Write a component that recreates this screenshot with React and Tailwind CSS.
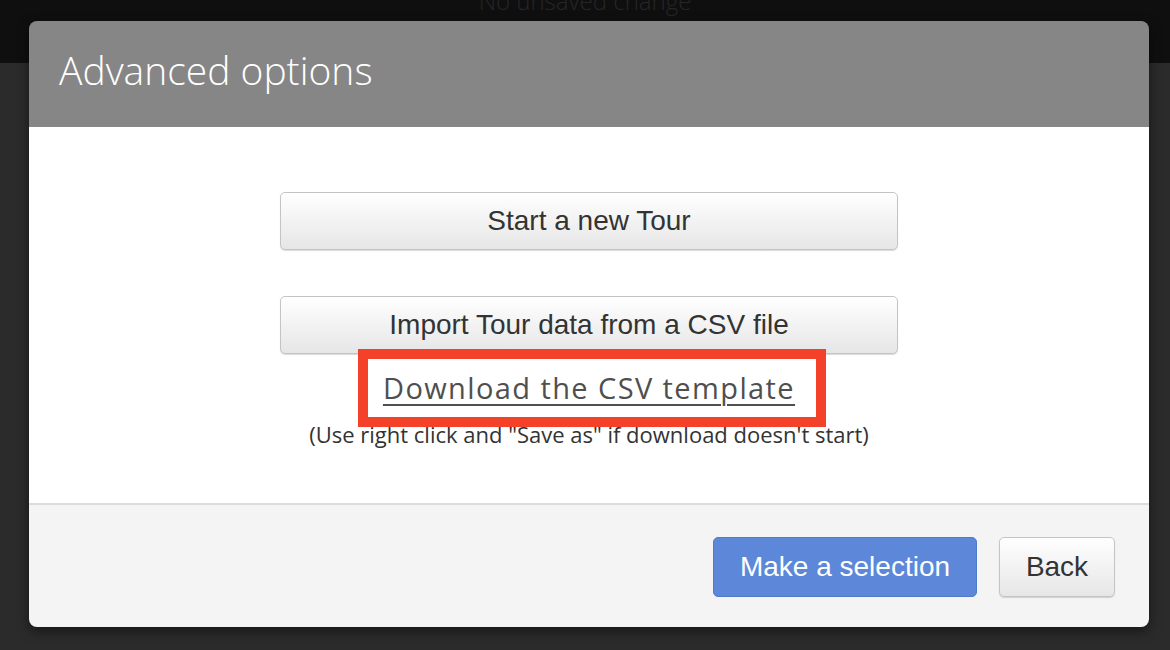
import React from "react";

const btn =
  "rounded-[5px] border border-[#c4c4c4] bg-gradient-to-b from-white to-[#e6e6e6] text-[#333] shadow-[0_1px_1px_rgba(0,0,0,0.15)]";

export default function App() {
  return (
    <div className="relative h-[650px] w-[1170px] overflow-hidden bg-[#2b2b2b] font-['Liberation_Sans',sans-serif]">
      {/* barre du haut derrière la modale */}
      <div className="flex h-[63px] justify-center bg-[#0f0f0f]">
        <p className="mt-[-17px] font-['Open_Sans',sans-serif] text-[24px] font-light text-[#262626]">
          No unsaved change
        </p>
      </div>

      {/* Modale */}
      <div className="absolute left-[29px] top-[21px] flex w-[1120px] flex-col overflow-hidden rounded-[8px] shadow-[0_4px_12px_rgba(0,0,0,0.5)]">
        <div className="flex h-[106px] items-center bg-[#868686] px-[30px] pb-[8px]">
          <h1 className="font-['Open_Sans',sans-serif] text-[39px] font-light text-white">
            Advanced options
          </h1>
        </div>

        <div className="flex h-[376px] flex-col items-center bg-white pt-[65px]">
          <button className={`${btn} h-[58px] w-[618px] text-[28px]`}>
            Start a new Tour
          </button>
          <button className={`${btn} mt-[46px] h-[58px] w-[618px] text-[28px]`}>
            Import Tour data from a CSV file
          </button>

          <div className="relative mt-[8px] flex h-[52px] items-center">
            <a
              href="#"
              className="font-['Open_Sans',sans-serif] text-[29px] font-medium tracking-[1.4px] text-[#4f4f4f] underline decoration-[2px] underline-offset-[5px]"
            >
              Download the CSV template
            </a>
          </div>
          <p className="mt-[4px] font-['Open_Sans',sans-serif] text-[22px] text-[#333]">
            (Use right click and "Save as" if download doesn't start)
          </p>
        </div>

        <div className="flex h-[124px] items-start justify-end gap-[22px] border-t-2 border-[#dcdcdc] bg-[#f4f4f4] pr-[34px] pt-[32px]">
          <button className="h-[60px] w-[264px] rounded-[5px] border border-[#4f7ad0] bg-[#5d87d9] text-[28px] text-white">
            Make a selection
          </button>
          <button className={`${btn} h-[60px] w-[116px] text-[28px]`}>
            Back
          </button>
        </div>
      </div>

      {/* cadre rouge d'annotation */}
      <div className="absolute left-[358px] top-[349px] h-[78px] w-[468px] border-[10px] border-[#f4422a]" />
    </div>
  );
}
